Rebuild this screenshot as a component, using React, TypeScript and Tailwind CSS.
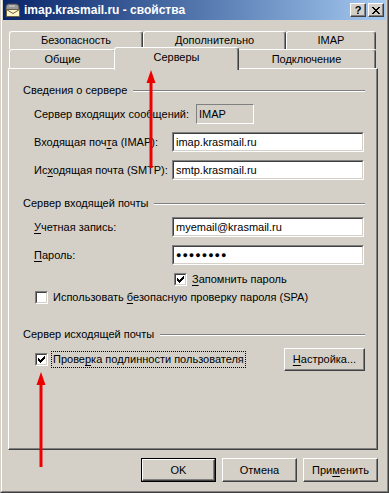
import React from 'react';

function Raised({ children, className = '' }: { children?: React.ReactNode; className?: string }) {
    return (
        <div className={`border border-t-white border-l-white border-b-[#404040] border-r-[#404040] bg-[#d4d0c8] shadow-[inset_-1px_-1px_#808080] flex items-center justify-center ${className}`}>
            {children}
        </div>
    );
}

function Field({ value, className = '' }: { value: React.ReactNode; className?: string }) {
    return (
        <div className={`h-[20px] border border-t-[#808080] border-l-[#808080] border-b-white border-r-white ${className}`}>
            <div className="h-full border border-t-[#404040] border-l-[#404040] border-b-[#d4d0c8] border-r-[#d4d0c8] bg-white flex items-center pl-[2px]">
                {value}
            </div>
        </div>
    );
}

function Check({ checked }: { checked?: boolean }) {
    return (
        <div className="w-[13px] h-[13px] shrink-0 border border-t-[#808080] border-l-[#808080] border-b-white border-r-white">
            <div className="w-full h-full border border-t-[#404040] border-l-[#404040] border-b-[#d4d0c8] border-r-[#d4d0c8] bg-white flex items-center justify-center">
                {checked && (
                    <svg width="7" height="7" viewBox="0 0 7 7" shapeRendering="crispEdges">
                        <rect x="6" y="0" width="1" height="1" fill="#000" />
                        <rect x="5" y="1" width="2" height="1" fill="#000" />
                        <rect x="0" y="2" width="1" height="1" fill="#000" />
                        <rect x="4" y="2" width="3" height="1" fill="#000" />
                        <rect x="0" y="3" width="2" height="1" fill="#000" />
                        <rect x="3" y="3" width="3" height="1" fill="#000" />
                        <rect x="0" y="4" width="5" height="1" fill="#000" />
                        <rect x="1" y="5" width="3" height="1" fill="#000" />
                        <rect x="2" y="6" width="1" height="1" fill="#000" />
                    </svg>
                )}
            </div>
        </div>
    );
}

function GroupTitle({ text }: { text: string }) {
    return (
        <div className="flex items-center h-[13px]">
            <span className="whitespace-nowrap">{text}</span>
            <div className="flex-1 ml-[6px] h-[2px] border-t border-t-[#808080] border-b border-b-white" />
        </div>
    );
}

function Tab({ label, className = '' }: { label: string; className?: string }) {
    return (
        <div className={`border-l border-t border-r border-l-white border-t-white border-r-[#404040] rounded-t-[3px] shadow-[inset_-1px_0_#808080] bg-[#d4d0c8] flex justify-center pt-[2px] ${className}`}>
            {label}
        </div>
    );
}

function U({ children }: { children: React.ReactNode }) {
    return <span className="underline underline-offset-[2px]">{children}</span>;
}

export default function App() {
    return (
        <div className="relative w-[389px] h-[493px] bg-[#d4d0c8] text-[11px] leading-[13px] text-black font-['Liberation_Sans',Arial,sans-serif] border-l border-r border-b border-l-[#d4d0c8] border-r-[#404040] border-b-[#404040]">
            <div className="h-full border-l border-r border-b border-l-white border-r-[#808080] border-b-[#808080] px-[1px] pb-[1px] flex flex-col">
                {/* Title bar */}
                <div className="h-[20px] bg-gradient-to-r from-[#0a246a] to-[#a6caf0] flex items-center pl-[2px] pr-[2px]">
                    <svg width="16" height="16" viewBox="0 0 16 16" className="shrink-0">
                        <path d="M3 2h8a3 3 0 0 1 3 3v3H1V5a3 3 0 0 1 2-3z" fill="#9a9a9a" stroke="#4a4a4a" strokeWidth="1" />
                        <rect x="1.5" y="7.5" width="13" height="7" fill="#fff6c8" stroke="#6b6040" />
                        <path d="M1.5 7.5l6.5 4 6.5-4" fill="none" stroke="#6b6040" />
                        <path d="M4 4h6" stroke="#d8d8d8" />
                    </svg>
                    <span className="ml-[3px] text-white font-bold text-[12px] whitespace-nowrap">imap.krasmail.ru - свойства</span>
                    <div className="flex-1" />
                    <Raised className="w-[16px] h-[14px] font-bold text-[11px] leading-none">?</Raised>
                    <Raised className="w-[16px] h-[14px] ml-[2px]">
                        <svg width="8" height="7" viewBox="0 0 8 7" shapeRendering="crispEdges">
                            <path d="M0 0h2v1H0zM6 0h2v1H6zM1 1h2v1H1zM5 1h2v1H5zM2 2h4v1H2zM3 3h2v1H3zM2 4h4v1H2zM1 5h2v1H1zM5 5h2v1H5zM0 6h2v1H0zM6 6h2v1H6z" fill="#000" />
                        </svg>
                    </Raised>
                </div>

                {/* Tabs + page */}
                <div className="ml-[5px] w-[370px] mt-[11px]">
                    <div className="flex pl-[1px] h-[18px]">
                        <Tab label="Безопасность" className="w-[134px] h-[18px]" />
                        <Tab label="Дополнительно" className="w-[143px] h-[18px]" />
                        <Tab label="IMAP" className="w-[90px] h-[18px]" />
                    </div>
                    <div className="flex items-start pl-[1px] h-[19px]">
                        <Tab label="Общие" className="w-[107px] h-[19px] pt-[3px]" />
                        <Tab label="Серверы" className="relative z-10 w-[125px] h-[23px] -mt-[2px] -mx-[2px] pt-[3px]" />
                        <Tab label="Подключение" className="w-[139px] h-[19px] pt-[3px]" />
                    </div>

                    <div className="h-[382px] border border-t-white border-l-white border-b-[#404040] border-r-[#404040] shadow-[inset_-1px_-1px_#808080] pt-[15px] pl-[14px] pr-[12px] flex flex-col">
                        {/* Group 1 */}
                        <GroupTitle text="Сведения о сервере" />
                        <div className="mt-[7px] pl-[11px] flex flex-col gap-[8px]">
                            <div className="h-[20px] flex items-center">
                                <span className="w-[162px]">Сервер вхо<U>д</U>ящих сообщений:</span>
                                <div className="w-[58px] h-[20px] border border-t-[#808080] border-l-[#808080] border-b-white border-r-white flex items-center pl-[2px]">IMAP</div>
                            </div>
                            <div className="h-[20px] flex items-center">
                                <span className="w-[138px]">Входящая поч<U>т</U>а (IMAP):</span>
                                <Field value="imap.krasmail.ru" className="w-[192px]" />
                            </div>
                            <div className="h-[20px] flex items-center">
                                <span className="w-[138px]">Ис<U>х</U>одящая почта (SMTP):</span>
                                <Field value="smtp.krasmail.ru" className="w-[192px]" />
                            </div>
                        </div>

                        {/* Group 2 */}
                        <div className="mt-[17px]">
                            <GroupTitle text="Сервер входящей почты" />
                        </div>
                        <div className="mt-[7px] pl-[11px] flex flex-col">
                            <div className="h-[20px] flex items-center">
                                <span className="w-[138px]"><U>У</U>четная запись:</span>
                                <Field value="myemail@krasmail.ru" className="w-[192px]" />
                            </div>
                            <div className="mt-[8px] h-[20px] flex items-center">
                                <span className="w-[138px]"><U>П</U>ароль:</span>
                                <Field value={<span className="tracking-[1px] text-[9px]">●●●●●●●●</span>} className="w-[192px]" />
                            </div>
                            <div className="mt-[8px] h-[13px] flex items-center pl-[140px]">
                                <Check checked />
                                <span className="ml-[5px]"><U>З</U>апомнить пароль</span>
                            </div>
                            <div className="mt-[5px] h-[13px] flex items-center pl-[1px]">
                                <Check />
                                <span className="ml-[5px]">Использовать <U>б</U>езопасную проверку пароля (SPA)</span>
                            </div>
                        </div>

                        {/* Group 3 */}
                        <div className="mt-[24px]">
                            <GroupTitle text="Сервер исходящей почты" />
                        </div>
                        <div className="mt-[7px] pl-[12px] h-[23px] flex items-center">
                            <Check checked />
                            <span className="ml-[3px] px-[1px] py-[1px] border border-dotted border-black">Прове<U>р</U>ка подлинности пользователя</span>
                            <div className="flex-1" />
                            <Raised className="w-[81px] h-[23px]"><span><U>Н</U>астройка...</span></Raised>
                        </div>
                    </div>

                    {/* Dialog buttons */}
                    <div className="mt-[8px] flex justify-end gap-[6px]">
                        <div className="border border-black">
                            <Raised className="w-[73px] h-[22px]">OK</Raised>
                        </div>
                        <Raised className="w-[75px] h-[24px]">Отмена</Raised>
                        <Raised className="w-[75px] h-[24px]"><span>При<U>м</U>енить</span></Raised>
                    </div>
                </div>
            </div>

            {/* Red annotation arrows */}
            <svg className="absolute left-0 top-0 pointer-events-none" width="389" height="493" viewBox="0 0 389 493">
                <polygon points="150,70 145.5,83 154.5,83" fill="#ee0000" />
                <rect x="148.5" y="81" width="3" height="87" fill="#ee0000" />
                <polygon points="40,372 35.5,385 44.5,385" fill="#ee0000" />
                <rect x="38.5" y="383" width="3" height="84" fill="#ee0000" />
            </svg>
        </div>
    );
}
